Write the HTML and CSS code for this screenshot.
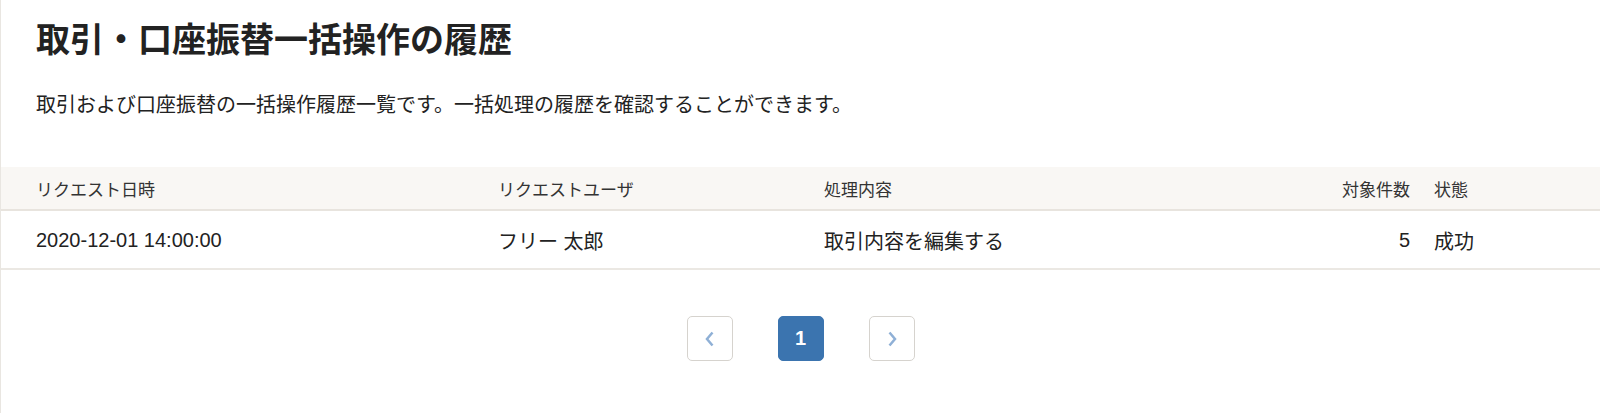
FILE: index.html
```html
<!DOCTYPE html>
<html lang="ja">
  <head>
    <meta charset="utf-8" />
    <title>取引・口座振替一括操作の履歴</title>
    <link rel="stylesheet" href="styles.css">
  </head>
  <body>
    <div id="page">
      <h1 class="page-title">取引・口座振替一括操作の履歴</h1>
      <p class="page-desc">取引および口座振替の一括操作履歴一覧です。一括処理の履歴を確認することができます。</p>

      <table class="history-table">
        <colgroup>
          <col class="col-date">
          <col class="col-user">
          <col>
          <col class="col-count">
          <col class="col-status">
        </colgroup>
        <thead>
          <tr>
            <th>リクエスト日時</th>
            <th>リクエストユーザ</th>
            <th>処理内容</th>
            <th class="num">対象件数</th>
            <th>状態</th>
          </tr>
        </thead>
        <tbody>
          <tr>
            <td>2020-12-01 14:00:00</td>
            <td>フリー 太郎</td>
            <td>取引内容を編集する</td>
            <td class="num">5</td>
            <td>成功</td>
          </tr>
        </tbody>
      </table>

      <!-- pagination -->
      <div class="pager">
        <button class="pager-btn" type="button" aria-label="前へ">
          <svg width="10" height="16" viewBox="0 0 10 16"><polyline points="7.5,1.5 2,8 7.5,14.5" fill="none" stroke="#8fb0d6" stroke-width="2.5"/></svg>
        </button>
        <button class="pager-btn current" type="button">1</button>
        <button class="pager-btn" type="button" aria-label="次へ">
          <svg width="10" height="16" viewBox="0 0 10 16"><polyline points="2.5,1.5 8,8 2.5,14.5" fill="none" stroke="#8fb0d6" stroke-width="2.5"/></svg>
        </button>
      </div>
    </div>
  </body>
</html>
```

FILE: styles.css
```css
/* history page */
body {
  margin: 0;
  padding: 0;
  background-color: #fff;
  color: #222;
  font-family: "Liberation Sans", "Noto Sans CJK JP", sans-serif;
}
#page {
  border-left: 1px solid #e9e6e1;
  min-height: 413px;
  box-sizing: border-box;
  padding-top: 18px;
}
.page-title {
  margin: 0 0 0 35px;
  font-size: 34px;
  line-height: 44px;
  font-weight: bold;
  color: #222;
}
.page-desc {
  margin: 28px 0 0 35px;
  font-size: 20px;
  line-height: 30px;
  color: #222;
}
.history-table {
  width: 100%;
  margin-top: 47px;
  border-collapse: collapse;
  table-layout: fixed;
}
.col-date {
  width: 485px;
}
.col-user {
  width: 326px;
}
.col-count {
  width: 120px;
}
.col-status {
  width: 178px;
}
.history-table th,
.history-table td {
  padding: 0 12px;
  text-align: left;
  white-space: nowrap;
}
.history-table th:first-child,
.history-table td:first-child {
  padding-left: 35px;
}
.history-table th {
  height: 42px;
  background-color: #f9f7f4;
  border-bottom: 2px solid #e8e4de;
  font-size: 17px;
  font-weight: normal;
  color: #333;
}
.history-table td {
  height: 55px;
  padding-top: 2px;
  border-bottom: 2px solid #ebe8e3;
  font-size: 20px;
  color: #222;
}
.history-table .num {
  text-align: right;
}
.pager {
  display: flex;
  justify-content: center;
  gap: 45px;
  margin-top: 46px;
}
.pager-btn {
  width: 46px;
  height: 45px;
  box-sizing: border-box;
  border: 1.5px solid #d6d3ce;
  border-radius: 5px;
  background-color: #fff;
  padding: 0;
  display: flex;
  align-items: center;
  justify-content: center;
  cursor: pointer;
}
.pager-btn.current {
  background-color: #3b74af;
  border-color: #3b74af;
  color: #fff;
  font-family: "Liberation Sans", sans-serif;
  font-size: 20px;
  font-weight: bold;
}
```
